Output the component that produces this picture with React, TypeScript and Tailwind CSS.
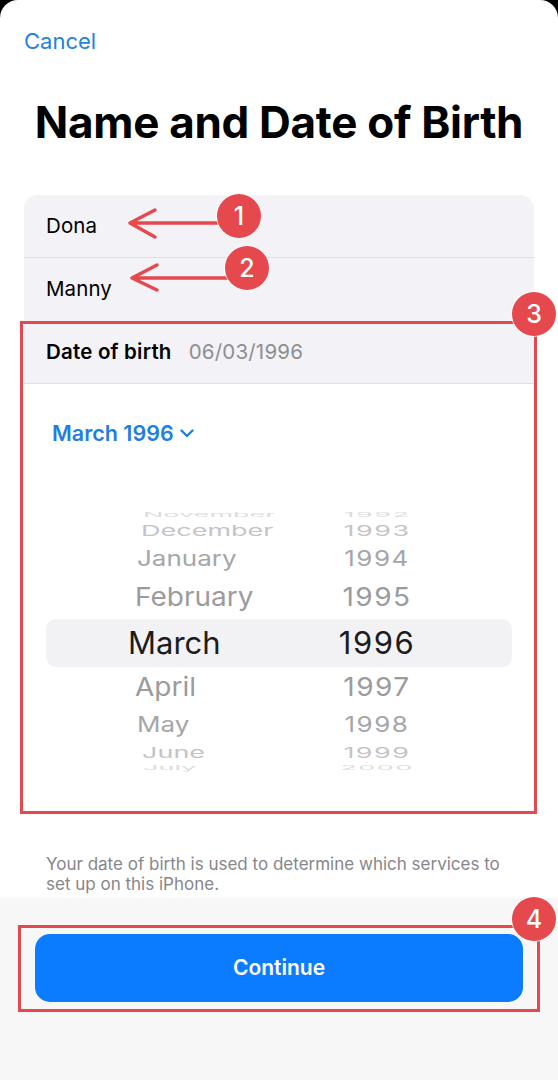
import React from "react";

const RED = "#e5484d";

const ROWS = [
    { month: "November", year: "1992", h: "h-[12px]", size: "text-[27px]", scale: "scale-y-[0.25]", color: "text-[#dcdcdc]", pl: "pl-[97px]" },
    { month: "December", year: "1993", h: "h-[21px]", size: "text-[27px]", scale: "scale-y-[0.55]", color: "text-[#c4c4c8]", pl: "pl-[95px]" },
    { month: "January", year: "1994", h: "h-[35px]", size: "text-[26px]", scale: "scale-y-[0.8]", color: "text-[#a6a6a8]", pl: "pl-[91px]" },
    { month: "February", year: "1995", h: "h-[42px]", size: "text-[28px]", scale: "scale-y-[0.93]", color: "text-[#9b9b9d]", pl: "pl-[89px]" },
    { month: "March", year: "1996", h: "h-[48px]", size: "text-[31px]", scale: "", color: "text-[#1c1c1e]", pl: "pl-[82px]", selected: true },
    { month: "April", year: "1997", h: "h-[42px]", size: "text-[28px]", scale: "scale-y-[0.93]", color: "text-[#9b9b9d]", pl: "pl-[89px]" },
    { month: "May", year: "1998", h: "h-[34px]", size: "text-[26px]", scale: "scale-y-[0.8]", color: "text-[#a6a6a8]", pl: "pl-[91px]" },
    { month: "June", year: "1999", h: "h-[20px]", size: "text-[27px]", scale: "scale-y-[0.55]", color: "text-[#c4c4c8]", pl: "pl-[96px]" },
    { month: "July", year: "2000", h: "h-[10px]", size: "text-[27px]", scale: "scale-y-[0.25]", color: "text-[#dcdcdc]", pl: "pl-[97px]" },
];

function Badge({ n, className }: { n: number; className: string }) {
    return (
        <div
            className={`absolute flex h-[44px] w-[44px] items-center justify-center rounded-full bg-[#e5484d] text-[25px] font-medium leading-none text-white ring-1 ring-white/70 ${className}`}
        >
            {n}
        </div>
    );
}

export default function App() {
    return (
        <div className="h-[1080px] w-[558px] overflow-hidden bg-black font-['Inter','Liberation_Sans',sans-serif]">
            <div className="flex h-full flex-col rounded-t-[18px] bg-white">
                {/* Cancel */}
                <div className="px-6 pt-[28px]">
                    <span className="text-[22px] leading-[26px] text-[#2482e0]">Cancel</span>
                </div>

                {/* Title */}
                <h1 className="mt-[42px] h-[50px] whitespace-nowrap text-center text-[44px] font-bold leading-[50px] tracking-[-0.3px] text-black">
                    Name and Date of Birth
                </h1>

                {/* Name rows */}
                <div className="relative mx-6 mt-[48px] rounded-t-[14px] bg-[#f2f2f7]">
                    <div className="flex h-[63px] items-center border-b border-[#dfdfe4] px-[22px] text-[20.5px] tracking-[0.1px] text-black">
                        Dona
                    </div>
                    <div className="flex h-[63px] items-center px-[22px] text-[20.5px] tracking-[0.1px] text-black">Manny</div>

                    <svg
                        className="pointer-events-none absolute left-0 top-0"
                        width="240"
                        height="126"
                        viewBox="0 0 240 126"
                        fill="none"
                        stroke={RED}
                        strokeWidth="3.5"
                        strokeLinecap="round"
                        strokeLinejoin="round"
                    >
                        <path d="M106 28 H196 M131 15 L106 28 L131 42" />
                        <path d="M108 83 H204 M133 70 L108 83 L133 95" />
                    </svg>
                    <Badge n={1} className="left-[193px] top-[-1px]" />
                    <Badge n={2} className="left-[201px] top-[51px]" />
                </div>

                {/* Date of birth + picker */}
                <div className="relative mx-6">
                    <div className="flex h-[63px] items-center gap-[17px] border-b border-[#dfdfe4] bg-[#f2f2f7] px-[22px] text-[20.5px] tracking-[0.2px]">
                        <span className="font-semibold text-black">Date of birth</span>
                        <span className="text-[#8e8e93]">06/03/1996</span>
                    </div>

                    <div className="h-[430px] bg-white">
                        <div className="flex items-center gap-[6px] pl-[28px] pt-[37px]">
                            <span className="text-[21.5px] font-semibold leading-[24px] text-[#1f7fe0]">March 1996</span>
                            <svg width="14" height="9" viewBox="0 0 14 9" fill="none" stroke="#1f7fe0" strokeWidth="2.4" strokeLinecap="round" strokeLinejoin="round">
                                <path d="M1.5 1.5 L7 7 L12.5 1.5" />
                            </svg>
                        </div>

                        <div className="mt-[64px] flex flex-col">
                            {ROWS.map((r) => (
                                <div
                                    key={r.month}
                                    className={`mx-[22px] flex ${r.h} items-center overflow-hidden ${r.selected ? "rounded-[10px] bg-[#f2f2f5]" : ""}`}
                                >
                                    <div className={`w-[275px] shrink-0 ${r.pl}`}>
                                        <span className={`inline-block whitespace-nowrap leading-none ${r.size} ${r.scale} ${r.color}`}>
                                            {r.month}
                                        </span>
                                    </div>
                                    <div className="w-[112px] shrink-0 text-center">
                                        <span className={`inline-block leading-none tracking-[1.5px] ${r.size} ${r.scale} ${r.color}`}>{r.year}</span>
                                    </div>
                                </div>
                            ))}
                        </div>
                    </div>

                    <div className="pointer-events-none absolute -left-1 -right-[3px] bottom-0 top-0 border-[3px] border-[#e5484d]" />
                    <Badge n={3} className="left-[488px] top-[-29px]" />
                </div>

                {/* Footer note */}
                <p className="mt-[40px] pl-[46px] pr-[40px] pb-[4px] text-[17px] leading-[20px] text-[#86868b]">
                    Your date of birth is used to determine which services to set up on this iPhone.
                </p>

                {/* Bottom bar */}
                <div className="flex-1 bg-[#f7f7f7] pt-[36px]">
                    <div className="relative mx-[35px]">
                        <button className="flex h-[68px] w-full items-center justify-center rounded-[15px] bg-[#0b7bff] text-[21px] font-semibold text-white">
                            Continue
                        </button>
                        <div className="pointer-events-none absolute -bottom-[10px] -left-[17px] -right-[17px] -top-[9px] border-[3px] border-[#e5484d]" />
                        <Badge n={4} className="left-[477px] top-[-37px]" />
                    </div>
                </div>
            </div>
        </div>
    );
}
